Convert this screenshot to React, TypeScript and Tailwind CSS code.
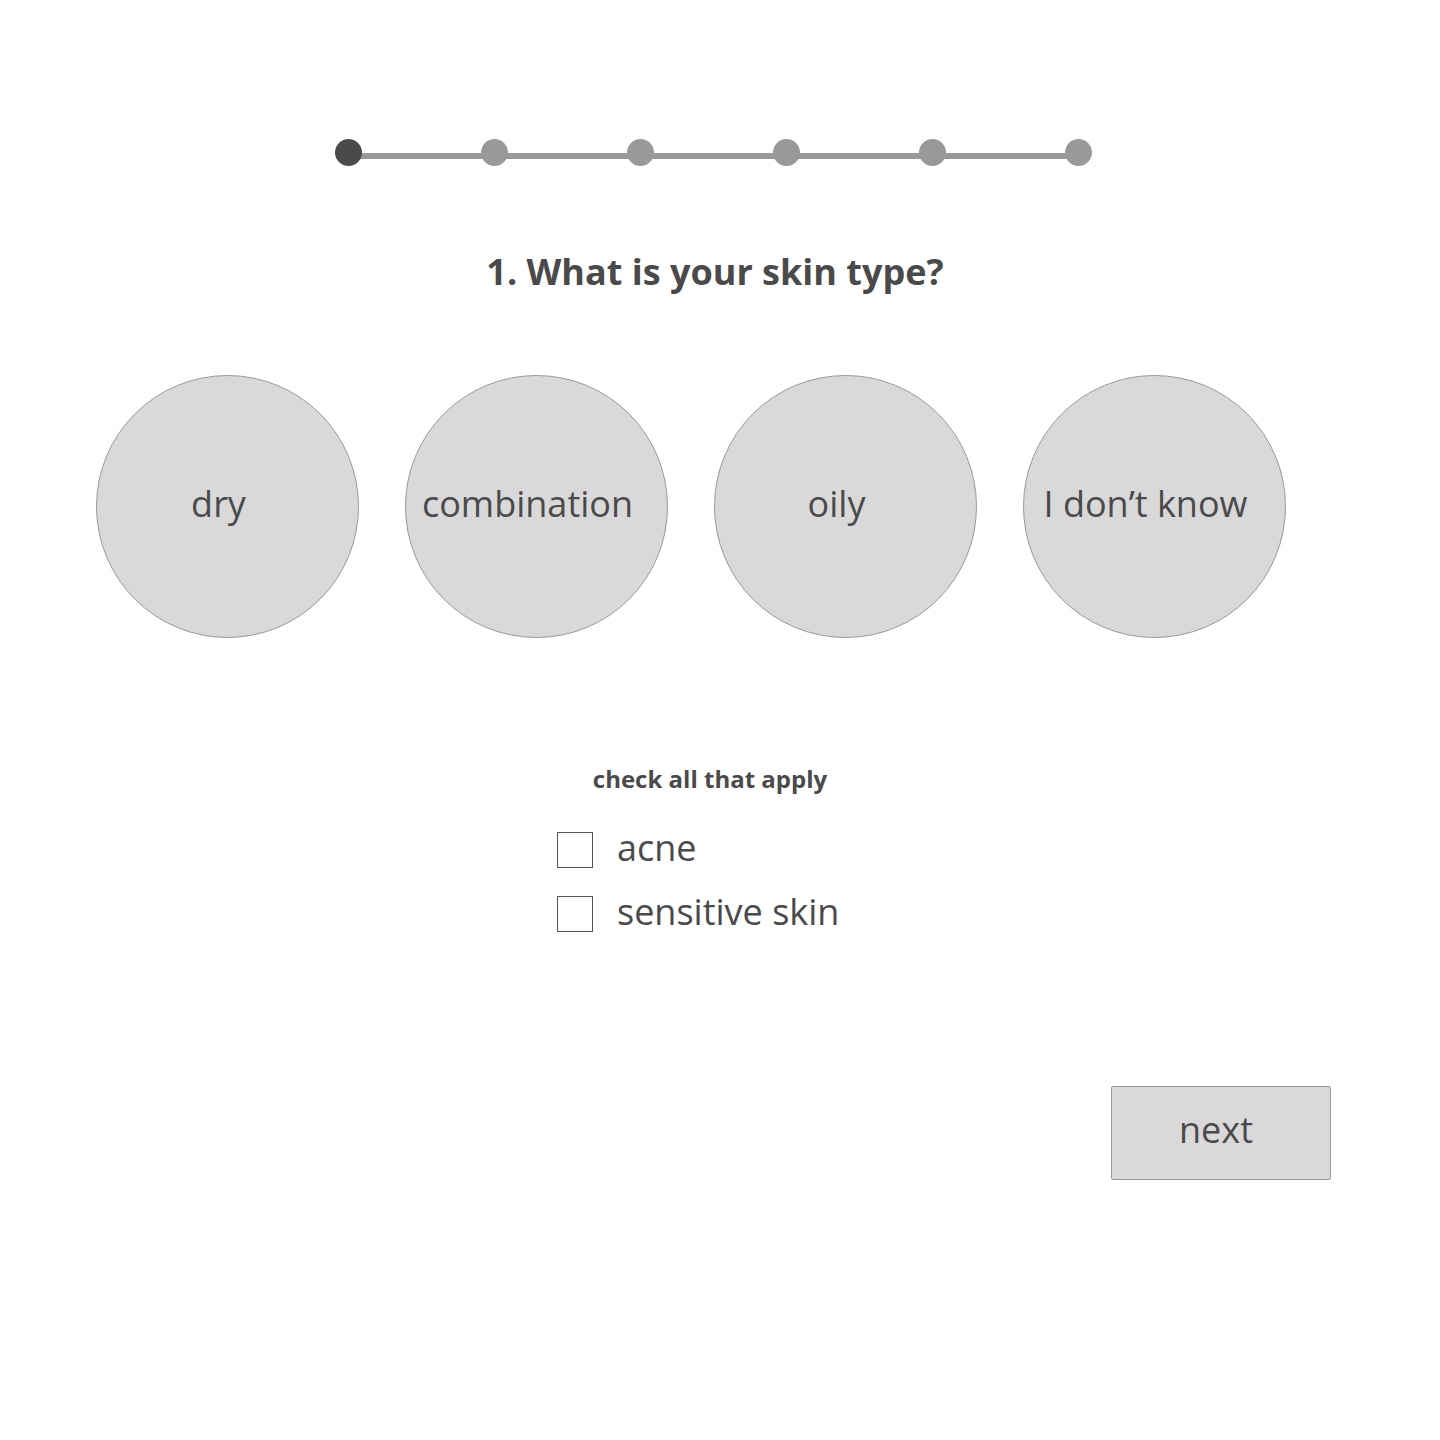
const steps = [0, 1, 2, 3, 4, 5]
const options = ['dry', 'combination', 'oily', 'I don’t know']
const concerns = ['acne', 'sensitive skin']

export default function App() {
  return (
    <div className="min-h-[1440px] w-[1440px] bg-white text-[#4a4a4a] font-['Open_Sans',sans-serif]">
      {/* progress */}
      <div className="pt-[139px] pl-[335px]">
        <div className="relative w-[757px] h-[27px]">
          <div className="absolute left-[13px] right-[13px] top-[14px] h-[6px] bg-[#999999]" />
          <div className="relative flex justify-between">
            {steps.map((s) => (
              <div
                key={s}
                className={`w-[27px] h-[27px] rounded-full ${s === 0 ? 'bg-[#4a4a4a]' : 'bg-[#999999]'}`}
              />
            ))}
          </div>
        </div>
      </div>

      <h1 className="mt-[81px] text-center pr-[10px] text-[36px] leading-[50px] font-bold">
        1. What is your skin type?
      </h1>

      <div className="mt-[78px] pl-[96px] flex gap-[46px]">
        {options.map((o) => (
          <button
            key={o}
            className="w-[263px] h-[263px] rounded-full bg-[#d9d9d9] border border-[#999999] flex items-center justify-center pr-[18px] pb-[6px] text-[36px] text-[#4a4a4a]"
          >
            {o}
          </button>
        ))}
      </div>

      <div className="mt-[125px] text-center pr-[20px] text-[24px] leading-[32px] font-bold">
        check all that apply
      </div>

      <div className="mt-[37px] pl-[557px] flex flex-col gap-[28px]">
        {concerns.map((c) => (
          <label key={c} className="flex items-center gap-[24px] h-[36px]">
            <span className="w-[36px] h-[36px] border border-[#555555] bg-white" />
            <span className="text-[36px] leading-[36px] -mt-[4px]">{c}</span>
          </label>
        ))}
      </div>

      <div className="mt-[154px] pl-[1111px]">
        <button className="w-[220px] h-[94px] bg-[#d9d9d9] border border-[#999999] rounded-[2px] pr-[10px] pb-[6px] text-[36px] text-[#4a4a4a]">
          next
        </button>
      </div>
    </div>
  )
}
